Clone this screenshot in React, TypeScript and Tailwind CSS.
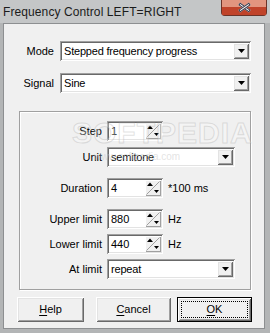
const FONT = "[font-family:'Liberation_Sans',Arial,sans-serif]";

const SUNKEN =
  "shadow-[inset_1px_1px_0_#a0a0a0,inset_-1px_-1px_0_#ffffff,inset_2px_2px_0_#696969,inset_-2px_-2px_0_#e3e3e3]";
const RAISED =
  "shadow-[inset_1px_1px_0_#ffffff,inset_-1px_-1px_0_#696969,inset_2px_2px_0_#e3e3e3,inset_-2px_-2px_0_#a0a0a0]";

function Combo({ value, width }: { value: string; width: string }) {
  return (
    <div className={`${width} h-[20px] bg-white ${SUNKEN} p-[2px] flex items-stretch`}>
      <div className="flex-1 pl-[2px] flex items-center text-[11px] tracking-[-0.2px] text-black leading-none">
        {value}
      </div>
      <div className={`w-[16px] bg-[#f0f0f0] ${RAISED} flex items-center justify-center`}>
        <svg width="7" height="4" viewBox="0 0 7 4">
          <polygon points="0,0 7,0 3.5,4" fill="#000" />
        </svg>
      </div>
    </div>
  );
}

function Spin({ value }: { value: string }) {
  return (
    <div className={`w-[56px] h-[20px] bg-white ${SUNKEN} p-[2px] flex items-stretch`}>
      <div className="flex-1 pl-[2px] flex items-center text-[11px] text-black leading-none">
        {value}
      </div>
      <div className="w-[16px] bg-[#f0f0f0] shadow-[inset_1px_1px_0_#ffffff,inset_-1px_-1px_0_#a0a0a0]">
        <svg width="16" height="16" viewBox="0 0 16 16">
          <line x1="1.5" y1="14.5" x2="14.5" y2="1.5" stroke="#a0a0a0" strokeWidth="1" />
          <polygon points="2,6 5,2.5 8,6" fill="#000" />
          <polygon points="9,10 14,10 11.5,13" fill="#000" />
        </svg>
      </div>
    </div>
  );
}

function Row({
  label,
  mt,
  children,
}: {
  label: string;
  mt: string;
  children: React.ReactNode;
}) {
  return (
    <div className={`flex items-center h-[20px] ${mt}`}>
      <div className="w-[82px] text-right text-[11px] text-black leading-none shrink-0">{label}</div>
      <div className="ml-[5px] flex items-center">{children}</div>
    </div>
  );
}

function Btn({
  label,
  width,
  ml,
  def,
}: {
  label: string;
  width: string;
  ml: string;
  def?: boolean;
}) {
  // first letter is the mnemonic
  const text = (
    <span className="text-[11px] text-black leading-none">
      <span className="underline underline-offset-2">{label[0]}</span>
      {label.slice(1)}
    </span>
  );
  if (def) {
    return (
      <div className={`${width} ${ml} h-[25px] border border-black`}>
        <div className={`w-full h-full bg-[#f0f0f0] ${RAISED} p-[3px]`}>
          <div className="w-full h-full border border-dotted border-black flex items-center justify-center">
            {text}
          </div>
        </div>
      </div>
    );
  }
  return (
    <div className={`${width} ${ml} h-[25px] bg-[#f0f0f0] ${RAISED} flex items-center justify-center`}>
      {text}
    </div>
  );
}

export default function App() {
  return (
    <div className={`${FONT} w-[270px] h-[333px] flex flex-col bg-[#b3b5b6] overflow-hidden`}>
      <div className="h-[23px] shrink-0 flex items-start bg-[#c4c6c7]">
        <span className="pl-[3px] pt-[6px] text-[12px] text-[#1b1b1b] tracking-[0.1px] leading-none">
          Frequency Control LEFT=RIGHT
        </span>
        <div className="relative ml-auto mr-[3px] w-[46px] h-[16px] shrink-0 rounded-b-[4px] border border-t-0 border-[#6b3328] bg-[#c94a2e] flex flex-col">
          <div className="h-[7px] bg-[#e2957f]" />
          <div className="flex-1 bg-[#c0432a]" />
          {/* X drawn with two crossed bars */}
          <div className="absolute left-[16px] top-[6px] w-[13px] h-[3px] bg-white border border-[#3b3b4a] rotate-[35deg]" />
          <div className="absolute left-[16px] top-[6px] w-[13px] h-[3px] bg-white border border-[#3b3b4a] -rotate-[35deg]" />
        </div>
      </div>

      <div className="relative flex-1 ml-[3px] mr-[5px] mb-[4px] border border-[#8d8f91] bg-[#f0f0f0] flex flex-col">
        <div className="flex items-center h-[20px] mt-[17px]">
          <div className="w-[50px] text-right text-[11px] text-black leading-none">Mode</div>
          <div className="ml-[6px]">
            <Combo value="Stepped frequency progress" width="w-[191px]" />
          </div>
        </div>
        <div className="flex items-center h-[20px] mt-[12px]">
          <div className="w-[50px] text-right text-[11px] text-black leading-none">Signal</div>
          <div className="ml-[6px]">
            <Combo value="Sine" width="w-[191px]" />
          </div>
        </div>

        <div className="mt-[18px] ml-[15px] w-[232px] h-[179px] border border-[#a0a0a0] shadow-[inset_1px_1px_0_#ffffff,1px_1px_0_#ffffff] pt-[9px]">
          <Row label="Step" mt="mt-0">
            <Spin value="1" />
          </Row>
          <Row label="Unit" mt="mt-[6px]">
            <Combo value="semitone" width="w-[128px]" />
          </Row>
          <Row label="Duration" mt="mt-[11px]">
            <Spin value="4" />
            <span className="ml-[5px] text-[11px] text-black leading-none">*100 ms</span>
          </Row>
          <Row label="Upper limit" mt="mt-[11px]">
            <Spin value="880" />
            <span className="ml-[5px] text-[11px] text-black leading-none">Hz</span>
          </Row>
          <Row label="Lower limit" mt="mt-[5px]">
            <Spin value="440" />
            <span className="ml-[5px] text-[11px] text-black leading-none">Hz</span>
          </Row>
          <Row label="At limit" mt="mt-[5px]">
            <Combo value="repeat" width="w-[128px]" />
          </Row>
        </div>

        <div className="flex mt-[7px]">
          <Btn label="Help" width="w-[67px]" ml="ml-[13px]" />
          <Btn label="Cancel" width="w-[75px]" ml="ml-[12px]" />
          <Btn label="OK" width="w-[75px]" ml="ml-[6px]" def />
        </div>

        {/* faint watermark over the group box */}
        <div className="absolute left-[68px] top-[94px] text-[30px] font-bold tracking-[1px] text-white/30 [-webkit-text-stroke:1px_rgba(170,170,170,0.35)] pointer-events-none leading-none">
          SOFTPEDIA
        </div>
        <div className="absolute left-[90px] top-[128px] text-[10px] text-[#c8c8c8]/50 pointer-events-none leading-none">
          www.softpedia.com
        </div>
      </div>
    </div>
  );
}
